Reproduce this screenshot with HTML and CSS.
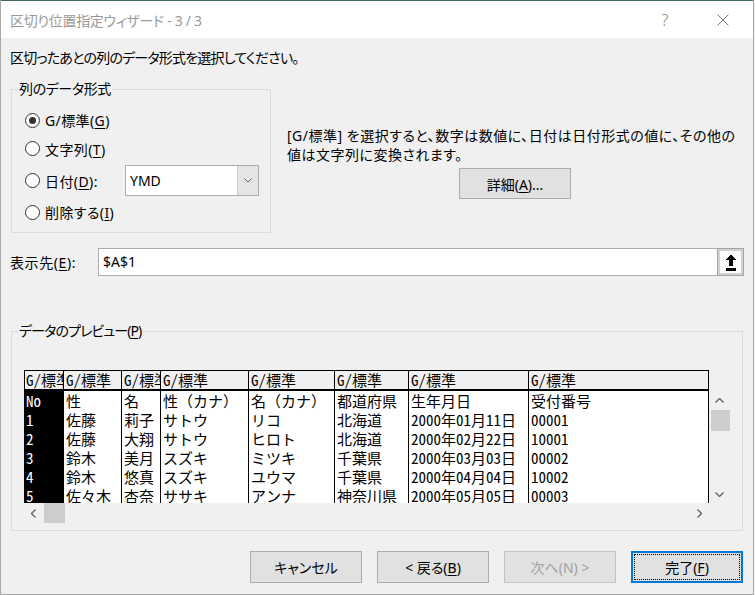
FILE: index.html
```html
<!DOCTYPE html>
<html lang="ja">
<head>
<meta charset="utf-8">
<title>区切り位置指定ウィザード - 3 / 3</title>
<link rel="stylesheet" href="styles.css">
</head>
<body>
<div class="dialog">
  <div class="titlebar">
    <span class="title">区切り位置指定ウィザード - 3 / 3</span>
    <span class="help">?</span>
    <span class="close"><svg width="12" height="12" viewBox="0 0 12 12"><path d="M0.5 0.5 L11.5 11.5 M11.5 0.5 L0.5 11.5" stroke="#777" stroke-width="1" fill="none"/></svg></span>
  </div>
  <div class="content">
    <p class="instruction">区切ったあとの列のデータ形式を選択してください。</p>
    <div class="top-row">
      <fieldset class="group format">
        <legend class="legend-format">列のデータ形式</legend>
        <div class="radios">
          <div class="radio-row r1"><span class="radio checked"></span><span class="rlabel">G/標準(<u>G</u>)</span></div>
          <div class="radio-row r2"><span class="radio"></span><span class="rlabel">文字列(<u>T</u>)</span></div>
          <div class="radio-row r3"><span class="radio"></span><span class="rlabel date-label">日付(<u>D</u>):</span>
            <div class="combo"><span class="combo-val">YMD</span><span class="combo-drop"><svg width="8" height="5" viewBox="0 0 8 5"><polyline points="0.5,0.5 4,4 7.5,0.5" fill="none" stroke="#606060" stroke-width="1"/></svg></span></div>
          </div>
          <div class="radio-row r4"><span class="radio"></span><span class="rlabel">削除する(<u>I</u>)</span></div>
        </div>
      </fieldset>
      <div class="desc">
        <p class="desc-text">[G/標準] を選択すると、数字は数値に、日付は日付形式の値に、その他の<br>値は文字列に変換されます。</p>
        <button class="btn detail">詳細(<u>A</u>)...</button>
      </div>
    </div>
    <div class="dest-row">
      <span class="dest-label">表示先(<u>E</u>):</span>
      <div class="input">
        <span class="input-val">$A$1</span>
        <span class="collapse-btn"><svg width="10" height="17" viewBox="0 0 10 17" shape-rendering="crispEdges"><polygon points="5,0 10,6 7,6 7,12 3,12 3,6 0,6" fill="#000"/><rect x="0" y="14" width="10" height="3" fill="#000"/></svg></span>
      </div>
    </div>
    <fieldset class="group preview">
      <legend class="legend-preview">データのプレビュー(<u>P</u>)</legend>
      <div class="preview-inner">
        <div class="grid-area">
          <div class="grid">
            <div class="row head"><span class="cell">G/標準</span><span class="cell">G/標準</span><span class="cell">G/標準</span><span class="cell">G/標準</span><span class="cell">G/標準</span><span class="cell">G/標準</span><span class="cell">G/標準</span><span class="cell">G/標準</span></div>
            <div class="row"><span class="cell sel">No</span><span class="cell">性</span><span class="cell">名</span><span class="cell">性（カナ）</span><span class="cell">名（カナ）</span><span class="cell">都道府県</span><span class="cell">生年月日</span><span class="cell">受付番号</span></div>
            <div class="row"><span class="cell sel">1</span><span class="cell">佐藤</span><span class="cell">莉子</span><span class="cell">サトウ</span><span class="cell">リコ</span><span class="cell">北海道</span><span class="cell">2000年01月11日</span><span class="cell">00001</span></div>
            <div class="row"><span class="cell sel">2</span><span class="cell">佐藤</span><span class="cell">大翔</span><span class="cell">サトウ</span><span class="cell">ヒロト</span><span class="cell">北海道</span><span class="cell">2000年02月22日</span><span class="cell">10001</span></div>
            <div class="row"><span class="cell sel">3</span><span class="cell">鈴木</span><span class="cell">美月</span><span class="cell">スズキ</span><span class="cell">ミツキ</span><span class="cell">千葉県</span><span class="cell">2000年03月03日</span><span class="cell">00002</span></div>
            <div class="row"><span class="cell sel">4</span><span class="cell">鈴木</span><span class="cell">悠真</span><span class="cell">スズキ</span><span class="cell">ユウマ</span><span class="cell">千葉県</span><span class="cell">2000年04月04日</span><span class="cell">10002</span></div>
            <div class="row"><span class="cell sel">5</span><span class="cell">佐々木</span><span class="cell">杏奈</span><span class="cell">ササキ</span><span class="cell">アンナ</span><span class="cell">神奈川県</span><span class="cell">2000年05月05日</span><span class="cell">00003</span></div>
          </div>
          <div class="vscroll">
            <span class="sarrow"><svg width="9" height="5" viewBox="0 0 9 5"><polyline points="0.5,4.5 4.5,0.5 8.5,4.5" fill="none" stroke="#606060" stroke-width="1.3"/></svg></span>
            <span class="vthumb"></span>
            <span class="vspace"></span>
            <span class="sarrow"><svg width="9" height="5" viewBox="0 0 9 5"><polyline points="0.5,0.5 4.5,4.5 8.5,0.5" fill="none" stroke="#606060" stroke-width="1.3"/></svg></span>
          </div>
        </div>
        <div class="hscroll">
          <span class="harrow"><svg width="5" height="9" viewBox="0 0 5 9"><polyline points="4.5,0.5 0.5,4.5 4.5,8.5" fill="none" stroke="#606060" stroke-width="1.3"/></svg></span>
          <span class="hthumb"></span>
          <span class="hspace"></span>
          <span class="harrow"><svg width="5" height="9" viewBox="0 0 5 9"><polyline points="0.5,0.5 4.5,4.5 0.5,8.5" fill="none" stroke="#606060" stroke-width="1.3"/></svg></span>
        </div>
      </div>
    </fieldset>
    <div class="buttons">
      <button class="btn big">キャンセル</button>
      <button class="btn big">&lt; 戻る(<u>B</u>)</button>
      <button class="btn big disabled">次へ(N) &gt;</button>
      <button class="btn big default">完了(<u>F</u>)</button>
    </div>
  </div>
</div>
</body>
</html>
```

FILE: styles.css
```css
* { box-sizing: border-box; }
html, body { margin: 0; padding: 0; }
body {
  width: 755px;
  height: 595px;
  overflow: hidden;
  background: #f0f0f0;
  font-family: "Noto Sans", "Noto Sans CJK JP", sans-serif;
  font-size: 14px;
  color: #000;
}
u { text-decoration-thickness: 1px; text-underline-offset: 2px; }

.dialog {
  width: 754px;
  height: 595px;
  background: #f0f0f0;
  border-left: 1px solid #a8a8a8;
  border-right: 1px solid #a8a8a8;
  border-bottom: 1px solid #a8a8a8;
  display: flex;
  flex-direction: column;
}

.titlebar {
  height: 38px;
  flex: none;
  background: #fff;
  border-top: 1px solid #3f6d52;
  display: flex;
  align-items: center;
  padding-left: 9px;
}
.title { flex: 1; color: #9a9a9a; font-size: 14px; font-feature-settings: "palt"; letter-spacing: -0.3px; }
.help, .close {
  width: 46px;
  height: 37px;
  display: flex;
  align-items: center;
  justify-content: center;
  color: #808080;
}
.help { margin-right: 12px; font-size: 16px; font-weight: 300; font-family: "Noto Sans", sans-serif; }
.close { margin-right: 7px; }

.content {
  flex: 1;
  padding: 10px 10px 0 10px;
  display: flex;
  flex-direction: column;
  font-feature-settings: "palt";
}
.instruction { margin: 0 0 11px -1px; height: 20px; line-height: 20px; letter-spacing: -0.8px; }

.top-row { display: flex; height: 154px; }
fieldset.group {
  margin: 0;
  padding: 0;
  border: 1px solid #dcdcdc;
  min-width: 0;
}
legend { margin-left: 6px; padding: 0 1px; line-height: 20px; }
.legend-format { letter-spacing: -0.4px; }
.legend-preview { letter-spacing: -0.9px; }
.group.format { width: 260px; height: 154px; flex: none; }
.radios { padding: 7px 0 0 13px; }
.radio-row { display: flex; align-items: center; height: 28px; }
.r2 { height: 29px; }
.r3 { height: 35px; }
.r4 { height: 28px; }
.rlabel { letter-spacing: 0.4px; }
.radio {
  width: 15px;
  height: 15px;
  border-radius: 50%;
  border: 1px solid #333;
  background: #fff;
  margin-right: 5px;
  display: flex;
  align-items: center;
  justify-content: center;
  flex: none;
}
.radio.checked::after {
  content: "";
  width: 7px;
  height: 7px;
  border-radius: 50%;
  background: #333;
}
.date-label { width: 80px; }
.combo {
  width: 134px;
  height: 31px;
  border: 1px solid #adadad;
  background: #fff;
  display: flex;
}
.combo-val { flex: 1; padding-left: 4px; line-height: 29px; }
.combo-drop {
  width: 21px;
  background: #e5e5e5;
  border-left: 1px solid #cfcfcf;
  display: flex;
  align-items: center;
  justify-content: center;
}

.desc {
  flex: 1;
  margin-left: 16px;
  padding-top: 47px;
  display: flex;
  flex-direction: column;
  align-items: center;
}
.desc-text { margin: 0; line-height: 19px; white-space: nowrap; align-self: stretch; letter-spacing: 0.5px; }

.btn {
  font: inherit;
  color: #000;
  background: #e1e1e1;
  border: 1px solid #adadad;
  padding: 0;
  margin: 0;
  font-feature-settings: "palt";
}
.detail { width: 112px; height: 31px; margin-top: 4px; }

.dest-row { display: flex; align-items: center; margin-top: 15px; height: 28px; }
.dest-label { width: 88px; margin-left: -1px; flex: none; letter-spacing: 0.6px; }
.input {
  flex: 1;
  height: 28px;
  margin-right: -1px;
  border: 1px solid #adadad;
  background: #fff;
  display: flex;
}
.input-val { flex: 1; padding-left: 4px; line-height: 26px; }
.collapse-btn {
  width: 27px;
  height: 28px;
  margin: -1px -1px -1px 0;
  border: 1px solid #a6a6a6;
  box-shadow: inset 0 0 0 2px #d2d2d2;
  background: #fcfcfc;
  display: flex;
  align-items: center;
  justify-content: center;
}

.group.preview { margin-top: 45px; height: 210px; }
.preview-inner { padding: 29px 0 0 12px; }
.grid-area { display: flex; height: 133px; }
.grid {
  width: 685px;
  height: 133px;
  flex: none;
  overflow: hidden;
  border-left: 1px solid #000;
  border-right: 1px solid #000;
  border-top: 1px solid #000;
  background: #fff;
  font-family: "Noto Sans Mono CJK JP", "Noto Sans CJK JP", monospace;
  font-size: 15px;
  font-weight: 300;
  font-feature-settings: normal;
}
.row {
  display: grid;
  grid-template-columns: 38px 58px 39px 88px 86px 74px 120px 180px;
  height: 19px;
}
.row.head { height: 20px; border-bottom: 2px solid #000; background: #f0f0f0; }
.cell {
  border-left: 1px solid #000;
  padding-left: 2px;
  overflow: hidden;
  white-space: nowrap;
  line-height: 19px;
}
.head .cell { line-height: 18px; }
.cell:first-child { border-left: none; padding-left: 1px; }
.cell.sel { background: #000; color: #fff; }

.vscroll {
  width: 21px;
  height: 112px;
  margin-top: 21px;
  display: flex;
  flex-direction: column;
  align-items: center;
}
.sarrow { width: 21px; height: 18px; display: flex; align-items: center; justify-content: center; flex: none; }
.vthumb { width: 19px; height: 21px; margin: 1px 0 0 1px; background: #cdcdcd; flex: none; }
.vspace { flex: 1; }

.hscroll { width: 685px; height: 20px; display: flex; align-items: stretch; }
.harrow { width: 19px; display: flex; align-items: center; justify-content: center; flex: none; }
.hthumb { width: 21px; margin-left: 1px; background: #cdcdcd; flex: none; }
.hspace { flex: 1; }

.buttons { margin-top: 20px; display: flex; justify-content: flex-end; gap: 15px; }
.big { width: 112px; height: 32px; }
.disabled { color: #a0a0a0; border-color: #c4c4c4; }
.default { border: 2px solid #0078d7; outline: 1px dotted #000; outline-offset: -4px; }
```
